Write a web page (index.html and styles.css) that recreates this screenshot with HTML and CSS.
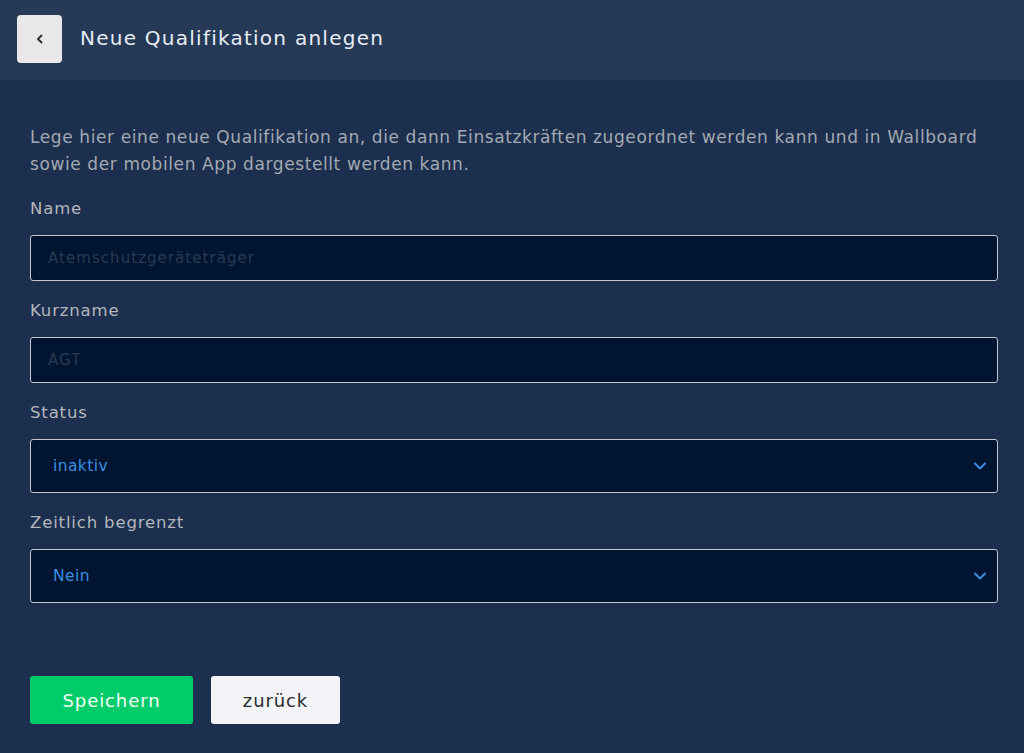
FILE: index.html
```html
<!DOCTYPE html>
<html lang="de">
<head>
<meta charset="utf-8">
<title>Neue Qualifikation anlegen</title>
<link rel="stylesheet" href="styles.css">
</head>
<body>
<header class="topbar">
  <button class="back-btn" type="button" aria-label="zurück">
    <svg width="10" height="12" viewBox="0 0 10 12"><path d="M6.5 2.5 L3 6 L6.5 9.5" fill="none" stroke="#2b2b2b" stroke-width="1.8" stroke-linecap="round" stroke-linejoin="round"/></svg>
  </button>
  <h1 class="title">Neue Qualifikation anlegen</h1>
</header>
<main class="content">
  <p class="intro">Lege hier eine neue Qualifikation an, die dann Einsatzkräften zugeordnet werden kann und in Wallboard sowie der mobilen App dargestellt werden kann.</p>
  <div class="field">
    <label class="label">Name</label>
    <input class="input" type="text" placeholder="Atemschutzgeräteträger">
  </div>
  <div class="field">
    <label class="label">Kurzname</label>
    <input class="input" type="text" placeholder="AGT">
  </div>
  <div class="field">
    <label class="label">Status</label>
    <div class="select">
      <span class="select-value">inaktiv</span>
      <svg class="chev" width="14" height="10" viewBox="0 0 14 10"><path d="M2 2.5 L7 7.5 L12 2.5" fill="none" stroke="#3a8ee0" stroke-width="2" stroke-linecap="round" stroke-linejoin="round"/></svg>
    </div>
  </div>
  <div class="field">
    <label class="label">Zeitlich begrenzt</label>
    <div class="select">
      <span class="select-value">Nein</span>
      <svg class="chev" width="14" height="10" viewBox="0 0 14 10"><path d="M2 2.5 L7 7.5 L12 2.5" fill="none" stroke="#3a8ee0" stroke-width="2" stroke-linecap="round" stroke-linejoin="round"/></svg>
    </div>
  </div>
  <div class="actions">
    <button class="btn btn-save" type="button">Speichern</button>
    <button class="btn btn-back" type="button">zurück</button>
  </div>
</main>
</body>
</html>
```
FILE: styles.css
```css
* { box-sizing: border-box; }
html, body { margin: 0; padding: 0; }
body {
  background: #1c2f4e;
  font-family: "DejaVu Sans", "Open Sans", sans-serif;
  height: 753px;
  overflow: hidden;
}
.topbar {
  height: 80px;
  background: #263a58;
  display: flex;
  align-items: flex-start;
  padding: 15px 17px 0;
  gap: 18px;
}
.back-btn {
  width: 45px;
  height: 48px;
  border: none;
  border-radius: 4px;
  background: #e8e8e8;
  display: flex;
  align-items: center;
  justify-content: center;
  padding: 0;
}
.title {
  margin: -1px 0 0;
  font-size: 20px;
  line-height: 48px;
  font-weight: 400;
  color: #e6edf5;
  letter-spacing: 1.25px;
}
.content {
  padding: 44px 26px 0 30px;
}
.intro {
  margin: 0 0 21px;
  font-size: 17px;
  line-height: 27px;
  letter-spacing: 0.6px;
  color: #a3a9b2;
}
.field { display: flex; flex-direction: column; }
.label {
  font-size: 16.5px;
  letter-spacing: 0.85px;
  color: #b3b7bd;
  line-height: 20px;
  margin-bottom: 16px;
}
.input {
  height: 46px;
  background: #001531;
  border: 1px solid #c3c7cd;
  border-radius: 3px;
  padding: 0 17px;
  font-family: inherit;
  font-size: 15px;
  letter-spacing: 1.05px;
  color: #e6edf5;
  margin-bottom: 20px;
  outline: none;
}
.input::placeholder { color: #2a3a52; }
.select {
  height: 54px;
  background: #001531;
  border: 1px solid #c3c7cd;
  border-radius: 3px;
  padding: 0 10px 0 22px;
  display: flex;
  align-items: center;
  justify-content: space-between;
  margin-bottom: 20px;
}
.select-value {
  font-size: 15.5px;
  letter-spacing: 0.4px;
  color: #3a8ee0;
}
.actions {
  display: flex;
  gap: 18px;
  margin-top: 53px;
}
.btn {
  height: 48px;
  border: none;
  border-radius: 3px;
  font-family: inherit;
  font-size: 18px;
  letter-spacing: 0.9px;
  padding: 0;
}
.btn-save {
  width: 163px;
  background: #00cc6a;
  color: #f3fff8;
}
.btn-back {
  width: 129px;
  background: #f2f4f7;
  color: #2d2d2d;
}
```
